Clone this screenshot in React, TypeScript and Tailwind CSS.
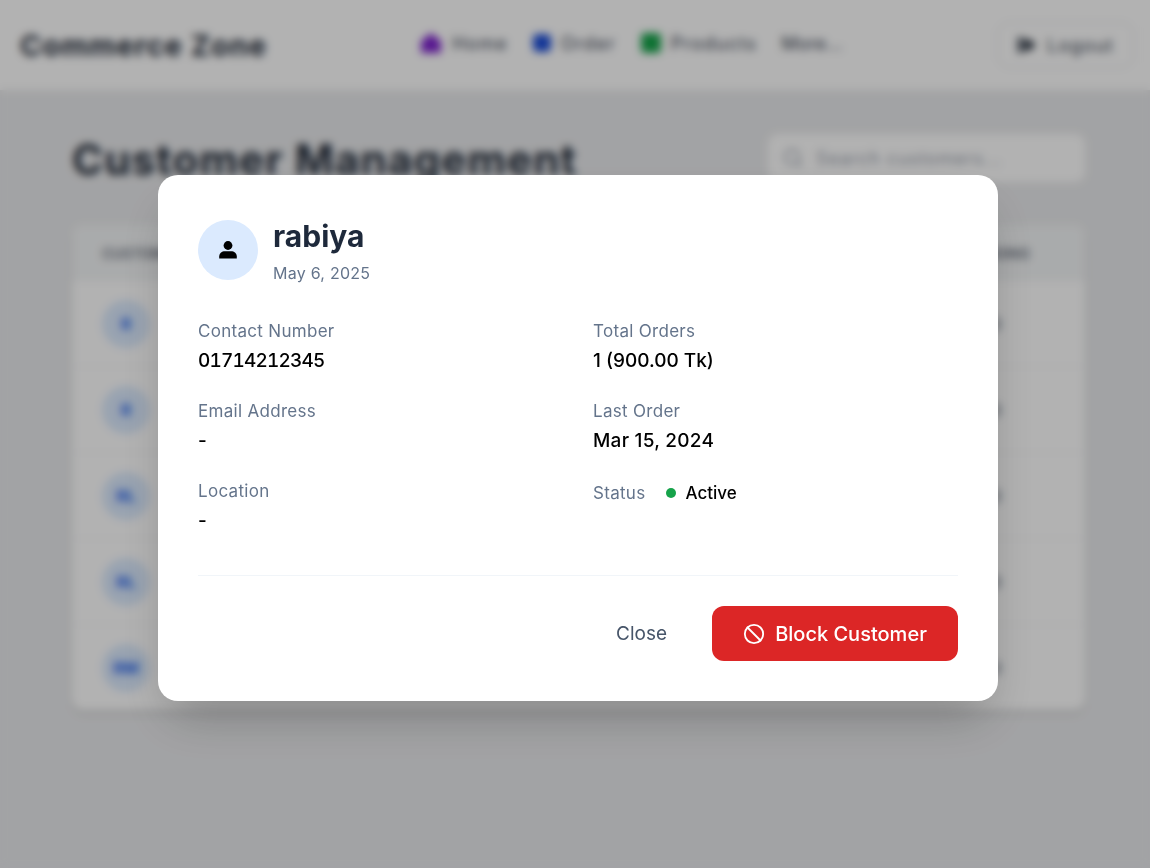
import { Ban, Search } from "lucide-react";

const rows = ["R", "R", "RL", "RL", "RM"];

const contactFields = [
  { label: "Contact Number", value: "01714212345", valueClass: "tabular-nums tracking-[-0.8px]" },
  { label: "Email Address", value: "-" },
  { label: "Location", value: "-" },
];

const orderFields = [
  { label: "Total Orders", value: "1 (900.00 Tk)" },
  { label: "Last Order", value: "Mar 15, 2024", valueClass: "tracking-[0.25px]" },
];

function Background() {
  return (
    <div className="flex min-h-[868px] flex-col bg-[#e9eaec]">
      <header className="flex h-[90px] items-center bg-white pl-[20px] pr-[16px]">
        <span className="pt-[2px] text-[29px] font-bold tracking-[1px] text-[#1f2937]">Commerce Zone</span>
        <nav className="ml-[153px] flex items-center gap-[24px] pb-[4px] text-[18px] tracking-[1.3px] text-[#374151]">
          <span className="flex items-center gap-[10px]">
            <svg viewBox="0 0 22 22" className="h-[22px] w-[22px]" fill="#7e22ce">
              <path d="M11 1 21 9v12H1V9z" />
            </svg>
            Home
          </span>
          <span className="flex items-center gap-[9px]">
            <svg viewBox="0 0 22 22" className="h-[20px] w-[20px]" fill="#1d4ed8">
              <rect x="1" y="1" width="20" height="20" rx="5" />
            </svg>
            Order
          </span>
          <span className="flex items-center gap-[9px]">
            <svg viewBox="0 0 22 22" className="h-[22px] w-[22px]" fill="#16a34a">
              <rect x="1" y="1" width="20" height="20" rx="4" />
            </svg>
            Products
          </span>
          <span className="tracking-[0.3px]">More...</span>
        </nav>
        <button className="ml-auto flex h-[46px] w-[137px] items-center justify-center gap-[10px] rounded-[12px] border border-[#e5e7eb] text-[18px] tracking-[1.3px] text-[#374151]">
          <svg viewBox="0 0 20 20" className="h-[20px] w-[20px]" fill="#1f2937">
            <rect x="1" y="2" width="4" height="16" rx="1" />
            <path d="M7 4h4l8 6-8 6H7z" />
          </svg>
          Logout
        </button>
      </header>

      <main className="pl-[72px] pr-[65px]">
        <div className="mt-[44px] flex h-[48px] items-center justify-between">
          <h1 className="pt-[3px] text-[42px] font-bold tracking-[1.2px] text-[#1f2937]">Customer Management</h1>
          <div className="flex h-[48px] w-[317px] items-center gap-[12px] rounded-[10px] bg-white pl-[14px] text-[#9ca3af]">
            <Search className="h-[22px] w-[22px]" />
            <span className="text-[18px] tracking-[0.85px]">Search customers...</span>
          </div>
        </div>

        <div className="mt-[43px] rounded-[12px] bg-white shadow-md">
          <div className="flex h-[55px] items-center justify-between rounded-t-[12px] bg-[#f3f5f6] pl-[30px] pr-[55px] pt-[2px] text-[14px] font-semibold text-[#6b7280]">
            <span>CUSTOMER</span>
            <span>PENDING</span>
          </div>
          {rows.map((initials, i) => (
            <div
              key={i}
              className="flex h-[86px] items-center justify-between border-t border-[#f3f4f6] pl-[30px] pr-[84px]"
            >
              <span className="flex h-[48px] w-[48px] items-center justify-center rounded-full bg-[#dbeafe] text-[16px] font-bold text-[#2563eb]">
                {initials}
              </span>
              <span className="text-[16px] text-[#374151]">0</span>
            </div>
          ))}
        </div>
      </main>
    </div>
  );
}

function Field({ label, value, valueClass }: { label: string; value: string; valueClass?: string }) {
  return (
    <div className="h-[80px]">
      <p className="text-[17px] leading-[24px] tracking-[0.3px] text-[#64748b]">{label}</p>
      <p className={`mt-[4px] text-[19px] font-medium leading-[28px] text-black ${valueClass ?? ""}`}>{value}</p>
    </div>
  );
}

export default function App() {
  return (
    <div className="relative h-[868px] overflow-hidden font-['Inter',sans-serif]">
      <Background />

      <div className="absolute inset-0 flex items-center justify-center bg-black/30 pl-[6px] pt-[8px] backdrop-blur-[4px]">
        <div className="w-[840px] rounded-[20px] bg-white p-[40px] shadow-2xl">
          <div className="mt-[3px] flex items-start gap-[15px]">
            <div className="mt-[2px] flex h-[60px] w-[60px] items-center justify-center rounded-full bg-[#dbeafe]">
              <svg viewBox="0 0 20 20" className="h-[20px] w-[20px]" fill="#000">
                <circle cx="10" cy="5.5" r="4.4" />
                <path d="M1.2 18.5v-2c0-3.2 2.6-5.3 5.6-5.3h6.4c3 0 5.6 2.1 5.6 5.3v2z" />
              </svg>
            </div>
            <div>
              <h2 className="text-[30px] font-bold leading-[36px] text-[#1e293b]">rabiya</h2>
              <p className="mt-[7px] text-[16px] leading-[24px] tracking-[0.25px] text-[#64748b]">May 6, 2025</p>
            </div>
          </div>

          <div className="mb-[16px] mt-[34px] grid grid-cols-2 gap-x-[30px]">
            <div>
              {contactFields.map((d) => (
                <Field key={d.label} label={d.label} value={d.value} valueClass={d.valueClass} />
              ))}
            </div>
            <div>
              {orderFields.map((d) => (
                <Field key={d.label} label={d.label} value={d.value} valueClass={d.valueClass} />
              ))}
              <div className="mt-[1px] flex items-center">
                <span className="text-[17px] leading-[24px] tracking-[0.3px] text-[#64748b]">Status</span>
                <span className="ml-[20px] h-[10px] w-[10px] rounded-full bg-[#16a34a]" />
                <span className="ml-[10px] pt-[1px] text-[17px] font-medium text-black">Active</span>
              </div>
            </div>
          </div>

          <div className="flex justify-end gap-[20px] border-t border-[#f1f5f9] pt-[30px]">
            <button className="flex h-[55px] items-center px-[25px] pt-[1px] text-[19px] text-[#475569]">Close</button>
            <button className="flex h-[55px] w-[246px] items-center justify-center gap-[10px] rounded-[12px] bg-[#dc2626] text-[20px] font-medium text-white">
              <Ban className="h-[22px] w-[22px]" /> Block Customer
            </button>
          </div>
        </div>
      </div>
    </div>
  );
}
